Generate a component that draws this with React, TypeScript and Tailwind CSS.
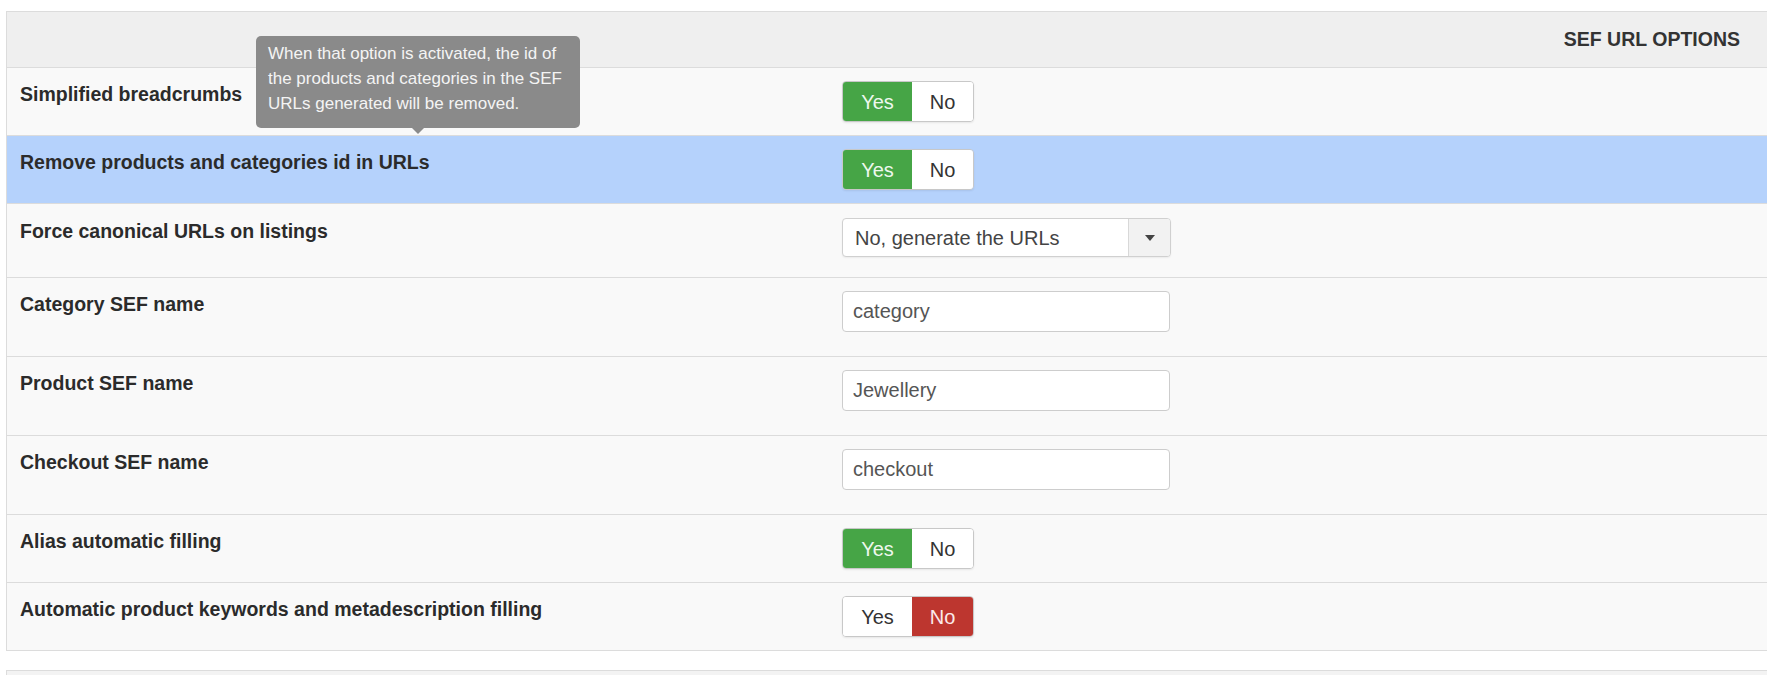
import { useState } from 'react'

type Toggle = { kind: 'toggle'; label: string; value: boolean }
type Select = { kind: 'select'; label: string; value: string }
type Text = { kind: 'text'; label: string; value: string }
type Option = Toggle | Select | Text

const OPTIONS: Option[] = [
  { kind: 'toggle', label: 'Simplified breadcrumbs', value: true },
  { kind: 'toggle', label: 'Remove products and categories id in URLs', value: true },
  { kind: 'select', label: 'Force canonical URLs on listings', value: 'No, generate the URLs' },
  { kind: 'text', label: 'Category SEF name', value: 'category' },
  { kind: 'text', label: 'Product SEF name', value: 'Jewellery' },
  { kind: 'text', label: 'Checkout SEF name', value: 'checkout' },
  { kind: 'toggle', label: 'Alias automatic filling', value: true },
  { kind: 'toggle', label: 'Automatic product keywords and metadescription filling', value: false },
]

function YesNo({ value }: { value: boolean }) {
  return (
    <div className="flex w-[132px] h-[41px] rounded-[4px] border border-[#c8c8c8] shadow-[0_1px_2px_rgba(0,0,0,0.08)] overflow-hidden text-[20px]">
      <button
        type="button"
        className={`w-[69px] flex items-center justify-center ${
          value ? 'bg-[#46a546] text-[#eef8ee]' : 'bg-white text-[#333]'
        }`}
      >
        Yes
      </button>
      <button
        type="button"
        className={`flex-1 flex items-center justify-center ${
          value ? 'bg-white text-[#333]' : 'bg-[#bd362f] text-[#fbeaea]'
        }`}
      >
        No
      </button>
    </div>
  )
}

function Dropdown({ value }: { value: string }) {
  return (
    <div className="flex w-[329px] h-[39px] rounded-[4px] border border-[#d0d0d0] bg-white shadow-[0_1px_2px_rgba(0,0,0,0.06)] overflow-hidden">
      <div className="flex-1 flex items-center pl-[12px] text-[20px] text-[#444]">{value}</div>
      <div className="w-[42px] flex items-center justify-center bg-[#f2f2f2] border-l border-[#d8d8d8]">
        <svg width="10" height="6" viewBox="0 0 10 6">
          <path d="M0 0h10L5 6z" fill="#444" />
        </svg>
      </div>
    </div>
  )
}

export default function App() {
  const [fields] = useState(OPTIONS)

  return (
    <div
      className="relative w-full h-[675px] overflow-hidden bg-white pt-[11px] pl-[6px]"
      style={{ fontFamily: '"Liberation Sans", Arial, sans-serif' }}
    >
      <div className="w-[1763px] border border-[#dcdcdc] bg-[#f9f9f9]">
        {/* Panel heading */}
        <div className="h-[55px] flex items-center justify-end pr-[28px] bg-[#efefef]">
          <span className="text-[19.5px] font-bold text-[#333]">SEF URL OPTIONS</span>
        </div>

        {fields.map((f, i) => {
          const pad =
            f.kind === 'text' ? 'pt-[13px] pb-[24px]' : f.kind === 'select' ? 'pt-[14px] pb-[20px]' : 'pt-[13px] pb-[13px]'
          return (
            <div
              key={i}
              className={`flex border-t border-[#dcdcdc] ${i === 1 ? 'bg-[#b5d2fc]' : ''}`}
            >
              <div className={`w-[835px] pl-[13px] ${pad}`}>
                <span className="text-[19.5px] leading-[26px] font-bold text-[#2b2b2b]">{f.label}</span>
              </div>
              <div className={pad}>
                {f.kind === 'toggle' && <YesNo value={f.value} />}
                {f.kind === 'select' && <Dropdown value={f.value} />}
                {f.kind === 'text' && (
                  <input
                    readOnly
                    value={f.value}
                    className="block w-[328px] h-[41px] rounded-[4px] border border-[#cdcdcd] bg-white px-[10px] text-[20px] text-[#555] outline-none"
                  />
                )}
              </div>
            </div>
          )
        })}
      </div>

      {/* Next panel, cut off at the bottom */}
      <div className="mt-[19px] w-[1763px] h-[40px] border border-[#dcdcdc] bg-[#f3f3f3]" />

      {/* Tooltip for the id removal option */}
      <div className="absolute left-[256px] top-[36px] w-[324px] h-[92px] rounded-[5px] bg-[#8a8a8a] px-[12px] pt-[5px] text-[17px] leading-[25px] text-[#f4f4f4]">
        When that option is activated, the id of the products and categories in the SEF URLs generated will be removed.
        <div className="absolute left-1/2 -translate-x-1/2 top-full w-0 h-0 border-x-[6px] border-x-transparent border-t-[6px] border-t-[#8a8a8a]" />
      </div>
    </div>
  )
}
